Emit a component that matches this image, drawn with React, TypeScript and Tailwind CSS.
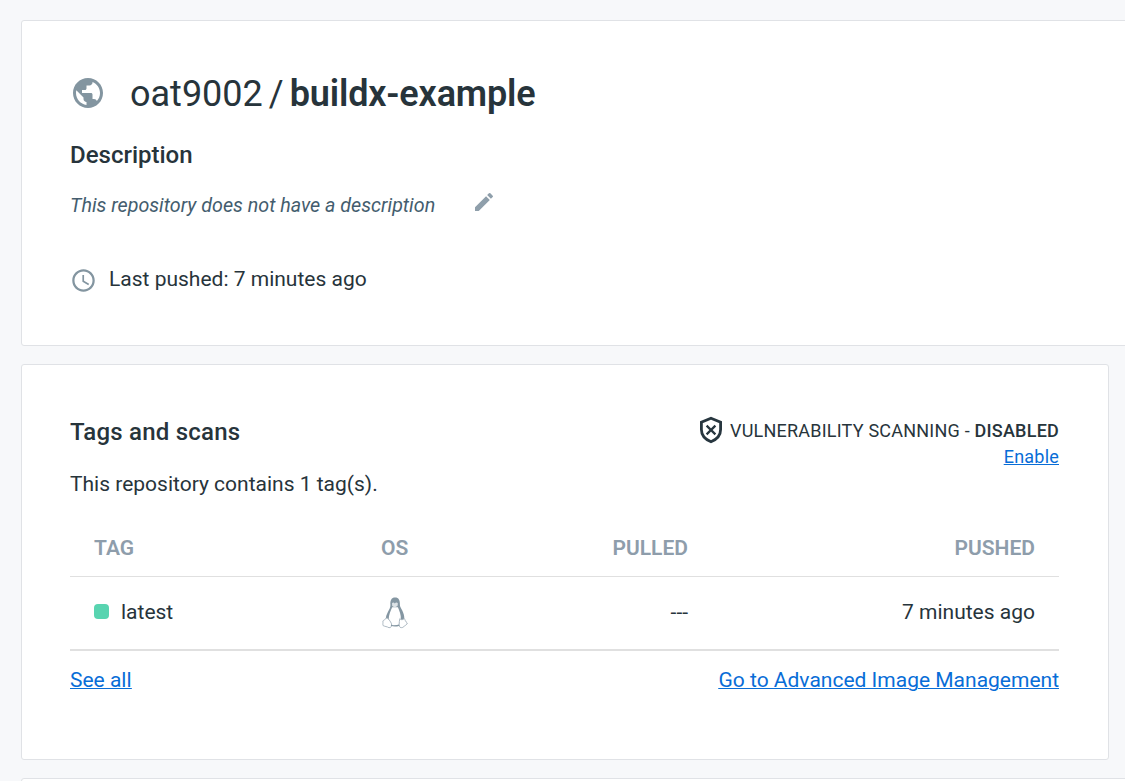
import React from 'react';
import { MdPublic, MdEdit, MdSchedule } from 'react-icons/md';

function ShieldX() {
  return (
    <svg viewBox="0 0 24 28" className="h-7 w-6" fill="none" stroke="#27363f" strokeWidth="2.8">
      <path d="M12 2.2 L21.6 6.2 V13.5 C21.6 19.2 17.8 23.4 12 25.8 C6.2 23.4 2.4 19.2 2.4 13.5 V6.2 Z" />
      <path d="M7.6 9.6 L16.4 18.4 M16.4 9.6 L7.6 18.4" strokeWidth="2.2" />
    </svg>
  );
}

function Penguin() {
  return (
    <svg viewBox="0 0 26 32" className="ml-[1px] h-8 w-[26px]">
      <path
        d="M8.4 8 C8 3.2 9.6 .6 13.1 .6 C16.7 .6 18.1 3.2 17.9 8 C17.9 11 22.8 15 22.3 22.4 L19.5 28.8 H7.5 L3.9 22.4 C3.4 17 8.6 12.5 8.4 8 Z"
        fill="#8496a2"
      />
      <path
        d="M10.2 10.3 C8.7 13.8 6.6 18 6.7 22.6 L9.5 28.4 H17 L18.8 23 C19.3 18 17.3 13.5 15.9 10.3 Z"
        fill="#fff"
      />
      <path d="M10 6.3 C10.8 5 12.2 5.5 12.8 6.5 C13.6 5.3 15.3 5.2 15.9 6.6 L15.5 9 L12.7 10.5 L10.2 8.9 Z" fill="#dce2e6" />
      <path
        d="M4.4 21 C6 20.6 8.6 24.6 9.5 26.8 C10.2 29.4 8.8 30.8 7 30.7 C5.2 29.6 2.6 29.4 1.2 28.7 C0.5 27.4 1.2 25.8 .9 24 C1.6 22.8 3.4 22.8 4.4 21 Z M17.8 21.6 C18.8 23.2 21 23 22.3 21.6 C23.2 22.6 23.2 24.6 25.3 26 C25.4 27.5 22.6 28.7 20.8 30.4 C18.6 31.2 16.9 30 17.1 27.8 C17.5 26 17.1 23.2 17.8 21.6 Z"
        fill="#fff"
        stroke="#a3b0ba"
        strokeWidth=".9"
      />
      <path d="M9 28.2 C11.4 29.2 14.6 29.1 17.2 28.1" stroke="#8496a2" strokeWidth="1.2" fill="none" />
    </svg>
  );
}

export default function App() {
  return (
    <div className="h-[781px] w-[1125px] overflow-hidden bg-[#f7f8fa] pl-[21px] pt-5 font-[Roboto,sans-serif] text-[#27343b]">
      <section className="h-[326px] w-[1120px] rounded-[3px] border border-[#e0e2e6] bg-white pl-12 pt-[48px]">
        <div className="flex h-12 items-center">
          <MdPublic className="size-9 text-[#8395a0]" />
          <h1 className="ml-6 whitespace-pre pt-[2px] text-[36px] leading-[48px]"><span>oat9002</span><span className="mx-[6px]">/</span><b className="font-semibold tracking-[-0.15px]">buildx-example</b></h1>
        </div>
        <h2 className="mt-[22px] text-[24px] font-medium leading-8">Description</h2>
        <div className="mt-[19px] flex h-8 items-center">
          <em className="text-[19.7px] text-[#445d6e]">This repository does not have a description</em>
          <MdEdit className="mb-[9px] ml-[37px] size-6 text-[#8f9fab]" />
        </div>
        <div className="mt-[41px] flex h-8 items-center text-[21px]">
          <MdSchedule className="mr-3 mt-[2px] size-[27px] text-[#8395a0]" />
          <span className="pt-[2px]">Last pushed: 7 minutes ago</span>
        </div>
      </section>
      <section className="mt-[18px] h-[396px] w-[1088px] rounded-[3px] border border-[#e0e2e6] bg-white pl-12 pr-[49px] pt-[51px]">
        <div className="flex h-[52px] justify-between">
          <h2 className="text-[24px] font-medium leading-8 tracking-[0.22px]">Tags and scans</h2>
          <div className="text-right text-[18px] leading-[26px] tracking-[0.22px]">
            <div className="flex h-7 items-center gap-[7px]"><ShieldX /><span className="pt-px">VULNERABILITY SCANNING - <b className="font-medium">DISABLED</b></span></div>
            <a className="block leading-[26px] text-[#086dd7] underline">Enable</a>
          </div>
        </div>
        <p className="text-[21px] leading-8">This repository contains 1 tag(s).</p>
        <div className="mt-[19px] flex h-[58px] items-center border-b border-[#e0e0e0] px-6 pt-[2px] text-[21px] font-semibold text-[#8e9dab]">
          <span className="w-[287px]">TAG</span><span className="w-[100px]">OS</span><span className="w-[207px] text-right">PULLED</span><span className="flex-1 text-right">PUSHED</span>
        </div>
        <div className="flex h-[74px] items-center border-b-2 border-[#e0e0e0] px-6 text-[21px]">
          <i className="mb-[3px] mr-3 size-[15px] rounded bg-[#58d4b0]" />
          <span className="w-[260px]">latest</span><span className="w-[100px]"><Penguin /></span><span className="w-[207px] text-right">---</span><span className="flex-1 text-right">7 minutes ago</span>
        </div>
        <div className="flex justify-between pt-[13px] text-[21px] leading-8 text-[#086dd7] underline decoration-1"><a>See all</a><a>Go to Advanced Image Management</a></div>
      </section>
      <section className="mt-[18px] h-10 w-[1120px] rounded-[3px] border border-[#e0e2e6] bg-white" />
    </div>
  );
}
